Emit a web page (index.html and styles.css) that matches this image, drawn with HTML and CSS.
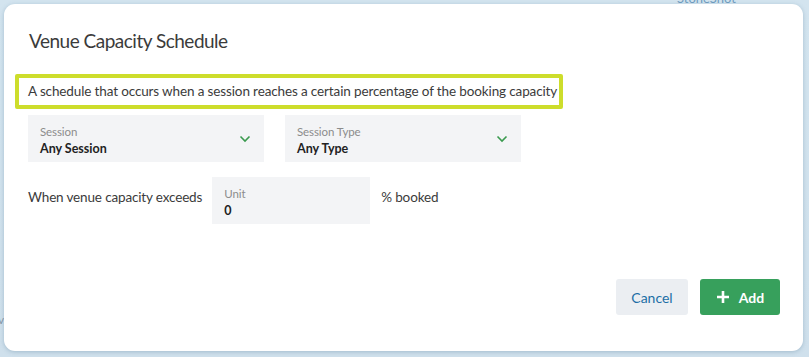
FILE: index.html
```html
<!DOCTYPE html>
<html>
<head>
<meta charset="utf-8">
<link rel="stylesheet" href="styles.css">
</head>
<body>
<div class="backdrop-text">StoneShot</div>
<div class="backdrop-glyph">v</div>
<div class="modal">
  <h1 class="title">Venue Capacity Schedule</h1>
  <p class="desc">A schedule that occurs when a session reaches a certain percentage of the booking capacity</p>
  <div class="selects">
    <div class="field select">
      <div class="field-text">
        <span class="label">Session</span>
        <span class="value">Any Session</span>
      </div>
      <svg class="chev" width="12" height="8" viewBox="0 0 12 8"><path d="M1.5 1.5 L6 6 L10.5 1.5" fill="none" stroke="#3a9a4f" stroke-width="1.6"/></svg>
    </div>
    <div class="field select">
      <div class="field-text">
        <span class="label">Session Type</span>
        <span class="value">Any Type</span>
      </div>
      <svg class="chev" width="12" height="8" viewBox="0 0 12 8"><path d="M1.5 1.5 L6 6 L10.5 1.5" fill="none" stroke="#3a9a4f" stroke-width="1.6"/></svg>
    </div>
  </div>
  <div class="capacity">
    <span class="text">When venue capacity exceeds</span>
    <div class="field unit">
      <div class="field-text">
        <span class="label">Unit</span>
        <span class="value">0</span>
      </div>
    </div>
    <span class="text">% booked</span>
  </div>
  <div class="footer">
    <button class="btn cancel">Cancel</button>
    <button class="btn add"><svg width="14" height="14" viewBox="0 0 14 14"><path d="M7 1 V13 M1 7 H13" stroke="#fff" stroke-width="2.6"/></svg>Add</button>
  </div>
</div>
</body>
</html>
```
FILE: styles.css
```css
* { box-sizing: border-box; }
html, body { margin: 0; padding: 0; }
body {
  width: 809px;
  height: 357px;
  overflow: hidden;
  background: linear-gradient(180deg, #d3e4ef 0%, #cfe0ec 100%);
  font-family: Lato, "Open Sans", sans-serif;
  padding: 4px 6px 6px 4px;
  position: relative;
}
.backdrop-text {
  position: absolute;
  left: 677px;
  top: -10px;
  font-size: 13px;
  color: #6f9cc0;
}
.backdrop-glyph {
  position: absolute;
  left: -2px;
  top: 312px;
  font-size: 12px;
  color: #8a9aa8;
}
.modal {
  position: relative;
  width: 799px;
  height: 347px;
  background: #fff;
  border-radius: 11px;
  box-shadow: 0 1px 4px rgba(80, 120, 150, 0.35);
  padding: 25px 23px 36px 24px;
  display: flex;
  flex-direction: column;
}
.title {
  margin: 0 0 0 1px;
  font-size: 19px;
  line-height: 24px;
  letter-spacing: -0.5px;
  font-weight: 400;
  color: #3b3b3b;
}
.desc {
  margin: 21px 0 0 -13px;
  align-self: flex-start;
  width: 548px;
  height: 35px;
  border: 4px solid #cddd2b;
  border-radius: 2px;
  padding: 0 9px;
  font-size: 13.5px;
  letter-spacing: -0.13px;
  white-space: nowrap;
  line-height: 27px;
  color: #3b3b3b;
}
.selects {
  margin-top: 6px;
  display: flex;
  gap: 21px;
}
.field {
  background: #f3f4f6;
  height: 47px;
  display: flex;
  align-items: flex-start;
  padding: 9px 13px 0 12px;
}
.select { width: 236px; }
.field-text {
  flex: 1;
  display: flex;
  flex-direction: column;
}
.label {
  font-size: 11.5px;
  line-height: 16px;
  color: #8c8c8c;
  letter-spacing: -0.1px;
}
.value {
  font-size: 12.5px;
  line-height: 17px;
  font-weight: 700;
  color: #222;
}
.chev { margin-top: 11px; }
.capacity {
  margin-top: 15px;
  display: flex;
  align-items: center;
  gap: 10px;
}
.capacity .text {
  font-size: 13.5px;
  letter-spacing: -0.15px;
  color: #3b3b3b;
  margin-top: -8px;
}
.capacity .text:last-child { margin-left: 1px; }
.unit { width: 158px; }
.footer {
  margin-top: auto;
  display: flex;
  justify-content: flex-end;
  gap: 12px;
}
.btn {
  height: 36px;
  border: none;
  border-radius: 3px;
  font-family: Lato, "Open Sans", sans-serif;
  font-size: 14px;
  display: flex;
  align-items: center;
  justify-content: center;
}
.cancel {
  width: 72px;
  background: #ebeef2;
  color: #1c6ea6;
}
.add {
  width: 80px;
  background: #37a05c;
  color: #fff;
  font-weight: 700;
  gap: 9px;
}
```
